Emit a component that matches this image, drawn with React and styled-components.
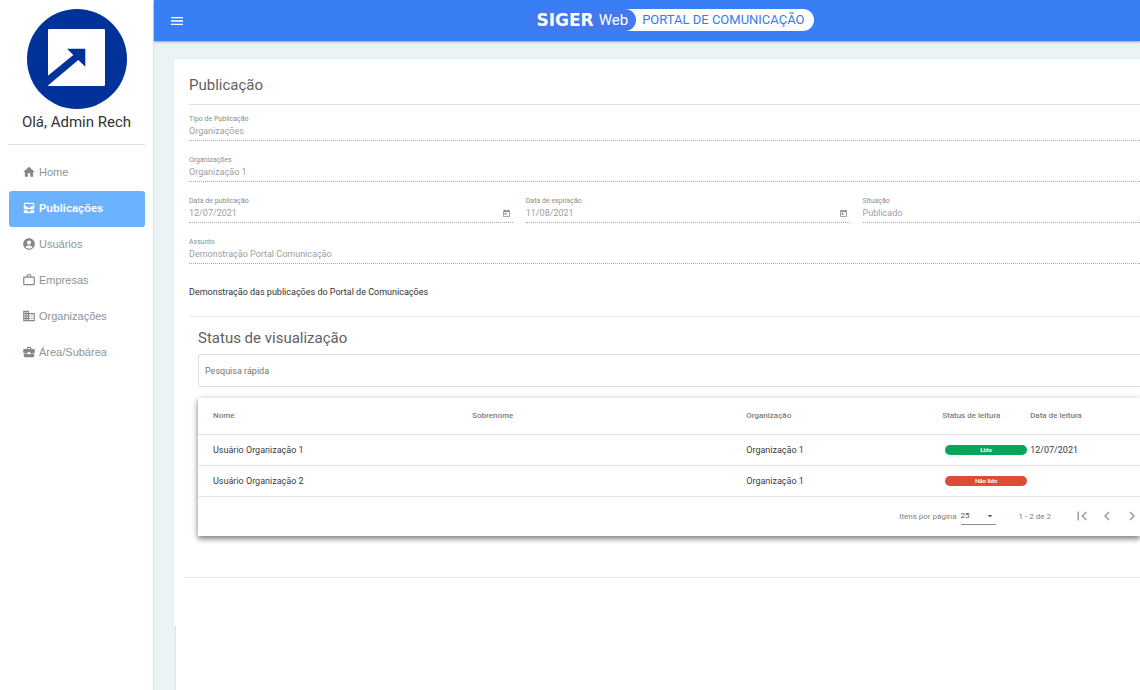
import React,{useState} from 'react'
import styled,{createGlobalStyle} from 'styled-components'
import {
    MdHome,
    MdAllInbox,
    MdAccountCircle,
    MdWorkOutline,
    MdBusiness,
    MdBusinessCenter,
    MdMenu,
    MdToday,
    MdFirstPage,
    MdChevronLeft,
    MdChevronRight,
    MdArrowDropDown
} from 'react-icons/md'

const GlobalStyle=createGlobalStyle`
    *{
    box-sizing:border-box;
    }
    body{
    margin:0;
    background-color:#fff;
    font-family:Roboto, sans-serif;
    font-size:9px;
    color:#3c3c3c;
    }
    button,input,select{
    font-family:inherit;
    font-size:inherit;
    }
`;

const Layout=styled.div`
    display:flex;
    min-height:100vh;
`;

const Sidebar=styled.aside`
    flex:none;
    width:154px;
    padding:9px 8px;
    border-right:1px solid #dce3e7;
    background-color:#fff;
`;

const Profile=styled.div`
    display:flex;
    flex-direction:column;
    align-items:center;
    height:136px;
    margin-bottom:10px;
    border-bottom:1px solid #e2e2e2;
`;

const UserName=styled.span`
    margin-top:3px;
    font-size:15px;
    line-height:20px;
    color:#333;
`;

const Menu=styled.nav`
    display:flex;
    flex-direction:column;
`;

const MenuItem=styled.a`
    display:flex;
    align-items:center;
    gap:3px;
    height:36px;
    margin-left:1px;
    padding:0 0 2px 13px;
    border-radius:3px;
    font-family:"Liberation Sans", Arial, sans-serif;
    font-size:11px;
    font-weight:${(p)=>p.$active ? 'bold' : 'normal'};
    text-decoration:none;
    color:${(p)=>p.$active ? '#fff' : '#8b9497'};
    background-color:${(p)=>p.$active ? '#6bb2ff' : 'transparent'};
    svg{
    width:14px;
    height:14px;
    color:${(p)=>p.$active ? '#fff' : '#7f898c'};
    }
`;

const Main=styled.div`
    flex:1;
    min-width:0;
    display:flex;
    flex-direction:column;
    background-color:#ebf3f7;
`;

const Header=styled.header`
    display:grid;
    grid-template-columns:1fr auto 1fr;
    align-items:center;
    height:41px;
    padding:0 15px 1px;
    background-color:#387ff5;
    box-shadow:0 1px 2px rgba(40,80,150,0.5);
`;

const MenuButton=styled.button`
    display:flex;
    width:16px;
    padding:2px 0 0;
    border:none;
    background:none;
    color:#fff;
`;

const Brand=styled.div`
    display:flex;
    height:22px;
    margin-right:-24px;
    margin-left:24px;
    white-space:nowrap;
`;

const BrandName=styled.div`
    z-index:1;
    display:flex;
    align-items:center;
    gap:5px;
    padding:0 8px;
    border-radius:11px;
    font-size:15px;
    color:#fff;
    background-color:#4279f1;
    b{
    font-family:"DejaVu Sans", sans-serif;
    font-size:17px;
    }
`;

const BrandProduct=styled.span`
    margin-left:-11px;
    padding:0 9px 0 17px;
    border-radius:0 11px 11px 0;
    font-size:13px;
    line-height:22px;
    color:#387bea;
    background-color:#fff;
`;

const Card=styled.section`
    margin:18px 0 0 20px;
    padding:10px 0 48px 10px;
    background-color:#fff;
    box-shadow:0 0 1px #cfdae0;
`;

const Below=styled.div`
    flex:1;
    margin-left:21px;
    border-left:1px solid #dce4e9;
    background-color:#fff;
`;

const CardBody=styled.div`
    padding-left:5px;
`;

const Title=styled.h1`
    margin:0;
    height:36px;
    border-bottom:1px solid #e0e0e0;
    font-size:15px;
    font-weight:400;
    line-height:32px;
    color:#616161;
`;

const Row=styled.div`
    display:grid;
    grid-template-columns:${(p)=>p.$columns || '1fr'};
    gap:13px;
    padding:9px 0 5px;
`;

const FieldBox=styled.div`
    display:flex;
    flex-direction:column;
    height:27px;
    border-bottom:1px dotted #a8a8a8;
`;

const Label=styled.label`
    font-size:7px;
    line-height:10px;
    color:#8c8c8c;
`;

const FieldLine=styled.div`
    flex:1;
    display:flex;
    align-items:center;
    padding:0 2px 2px 0;
`;

const FieldInput=styled.input`
    flex:1;
    min-width:0;
    padding:0;
    border:none;
    outline:none;
    background:none;
    color:#9e9e9e;
`;

const CalendarButton=styled.button`
    display:flex;
    padding:0;
    border:none;
    background:none;
    color:#8a8a8a;
`;

const Message=styled.p`
    margin:0;
    padding:16px 0 17px;
    border-bottom:1px solid #e6e6e6;
    line-height:14px;
    color:#333;
`;

const Status=styled.section`
    padding-left:9px;
    margin-bottom:41px;
`;

const SubTitle=styled.h2`
    margin:0;
    padding:8px 0 3px;
    font-size:15px;
    font-weight:400;
    line-height:26px;
    color:#616161;
`;

const Search=styled.input`
    display:block;
    width:100%;
    height:33px;
    padding:0 6px;
    border:1px solid #e2e2e2;
    border-right:none;
    border-radius:3px 0 0 3px;
    outline:none;
    background:none;
    color:#555;
    &::placeholder{
    color:#757575;
    opacity:1;
    }
`;

const TableCard=styled.div`
    margin-top:11px;
    background-color:#fff;
    box-shadow:0 3px 5px rgba(0,0,0,0.42), 0 1px 8px rgba(0,0,0,0.16);
`;

const Table=styled.table`
    width:100%;
    table-layout:fixed;
    border-collapse:collapse;
    text-align:left;
`;

const HeadCell=styled.th`
    width:${(p)=>p.$width};
    height:36px;
    padding:0;
    border-bottom:1px solid #e4e4e4;
    font-size:8px;
    font-weight:500;
    color:#7d7d7d;
    white-space:nowrap;
    &:first-child{
    padding-left:15px;
    }
`;

const Cell=styled.td`
    height:31px;
    padding:0;
    border-bottom:1px solid #e4e4e4;
    color:#3c3c3c;
    &:first-child{
    padding-left:15px;
    }
`;

const Badge=styled.span`
    display:block;
    margin:0 3px;
    border-radius:5px;
    font-family:Lato, sans-serif;
    font-size:6px;
    font-weight:900;
    line-height:10px;
    text-align:center;
    color:#fff;
    background-color:${(p)=>p.$read ? '#05a659' : '#dd4b39'};
`;

const Paginator=styled.div`
    display:flex;
    justify-content:flex-end;
    align-items:center;
    height:39px;
    font-size:8px;
    color:#808080;
`;

const PageSize=styled.div`
    display:grid;
    align-items:center;
    width:35px;
    height:17px;
    margin:0 23px 0 4px;
    border-bottom:1px solid #8f8f8f;
    select,svg{
    grid-area:1 / 1;
    }
    select{
    width:100%;
    padding:0;
    border:none;
    outline:none;
    appearance:none;
    background:none;
    color:#4d4d4d;
    }
    svg{
    justify-self:end;
    pointer-events:none;
    color:#666;
    }
`;

const PageButtons=styled.div`
    display:flex;
    gap:9px;
    margin-left:23px;
`;

const PageButton=styled.button`
    display:flex;
    justify-content:center;
    width:16px;
    padding:0;
    border:none;
    background:none;
    color:#9e9e9e;
    svg{
    flex:none;
    }
`;

const Divider=styled.hr`
    margin:0;
    border:none;
    border-top:1px solid #e6e6e6;
`;

const menu=[
    {name:'Home',icon:MdHome},
    {name:'Publicações',icon:MdAllInbox,active:true},
    {name:'Usuários',icon:MdAccountCircle},
    {name:'Empresas',icon:MdWorkOutline},
    {name:'Organizações',icon:MdBusiness},
    {name:'Área/Subárea',icon:MdBusinessCenter}
];

const columns=[
    {name:'Nome',width:'29.1%'},
    {name:'Sobrenome',width:'29.1%'},
    {name:'Organização',width:'20.8%'},
    {name:'Status de leitura',width:'88px'},
    {name:'Data de leitura',width:'auto'}
];

const readers=[
    {nome:'Usuário Organização 1',sobrenome:'',org:'Organização 1',lido:true,data:'12/07/2021'},
    {nome:'Usuário Organização 2',sobrenome:'',org:'Organização 1',lido:false,data:''}
];

function Logo() {
    return (
        <svg width="100" height="100" viewBox="0 0 100 100" aria-hidden="true">
        <circle cx="50" cy="50" r="50" fill="#013299" />
        <rect x="21" y="20" width="57" height="57" rx="1" fill="#fff" />
        <path d="M20 67.5 L46.3 46 L40 39.7 H58.3 V57.7 L51.3 51 L21.5 76 L20 77 Z" fill="#013299" />
        </svg>
    )
}

function Field({id,label,value,date}) {
    return (
        <FieldBox>
        <Label htmlFor={id}>{label}</Label>
        <FieldLine>
        <FieldInput id={id} type="text" value={value} disabled />
        {date &&
        <CalendarButton type="button" aria-label="Abrir calendário" disabled>
            <MdToday size={9} />
        </CalendarButton>}
        </FieldLine>
        </FieldBox>
    )
}

function App() {
const [search,setSearch]=useState('');
const [pageSize,setPageSize]=useState('25');

const rows=readers.filter((r)=>r.nome.toLowerCase().includes(search.toLowerCase()));

    return (
        <Layout>
        <GlobalStyle />
        <Sidebar>
        <Profile>
        <Logo />
        <UserName>Olá, Admin Rech</UserName>
        </Profile>
        <Menu>
        {menu.map((m)=>
        <MenuItem key={m.name} href="#" $active={m.active}>
        <m.icon />
        {m.name}
        </MenuItem>)}
        </Menu>
        </Sidebar>
        <Main>
        <Header>
        <MenuButton type="button" aria-label="Menu"><MdMenu size={16} /></MenuButton>
        <Brand>
        <BrandName><b>SIGER</b>Web</BrandName>
        <BrandProduct>PORTAL DE COMUNICAÇÃO</BrandProduct>
        </Brand>
        </Header>
        <Card>
        <CardBody>
        <Title>Publicação</Title>
        <Row><Field id="tipo" label="Tipo de Publicação" value="Organizações" /></Row>
        <Row><Field id="organizacoes" label="Organizações" value="Organização 1" /></Row>
        <Row $columns="7fr 7fr 6fr">
        <Field id="publicacao" label="Data de publicação" value="12/07/2021" date />
        <Field id="expiracao" label="Data de expiração" value="11/08/2021" date />
        <Field id="situacao" label="Situação" value="Publicado" />
        </Row>
        <Row><Field id="assunto" label="Assunto" value="Demonstração Portal Comunicação" /></Row>
        <Message>Demonstração das publicações do Portal de Comunicações</Message>
        <Status>
        <SubTitle>Status de visualização</SubTitle>
        <Search
        type="text"
        aria-label="Pesquisa rápida"
        placeholder="Pesquisa rápida"
        value={search}
        onChange={(e)=>setSearch(e.target.value)}/>
        <TableCard>
        <Table>
        <thead>
        <tr>
        {columns.map((c)=><HeadCell key={c.name} $width={c.width}>{c.name}</HeadCell>)}
        </tr>
        </thead>
        <tbody>
        {rows.map((r)=>
        <tr key={r.nome}>
        <Cell>{r.nome}</Cell>
        <Cell>{r.sobrenome}</Cell>
        <Cell>{r.org}</Cell>
        <Cell><Badge $read={r.lido}>{r.lido ? 'Lido' : 'Não lido'}</Badge></Cell>
        <Cell>{r.data}</Cell>
        </tr>)}
        </tbody>
        </Table>
        <Paginator>
        <label htmlFor="itens">Itens por página</label>
        <PageSize>
        <select id="itens" value={pageSize} onChange={(e)=>setPageSize(e.target.value)}>
            <option>10</option>
            <option>25</option>
            <option>50</option>
        </select>
        <MdArrowDropDown size={12} />
        </PageSize>
        <span>1 - 2 de 2</span>
        <PageButtons>
        <PageButton type="button" aria-label="Primeira página"><MdFirstPage size={18} /></PageButton>
        <PageButton type="button" aria-label="Página anterior"><MdChevronLeft size={18} /></PageButton>
        <PageButton type="button" aria-label="Próxima página"><MdChevronRight size={18} /></PageButton>
        </PageButtons>
        </Paginator>
        </TableCard>
        </Status>
        </CardBody>
        <Divider />
        </Card>
        <Below />
        </Main>
        </Layout>
    )
}

export default App
